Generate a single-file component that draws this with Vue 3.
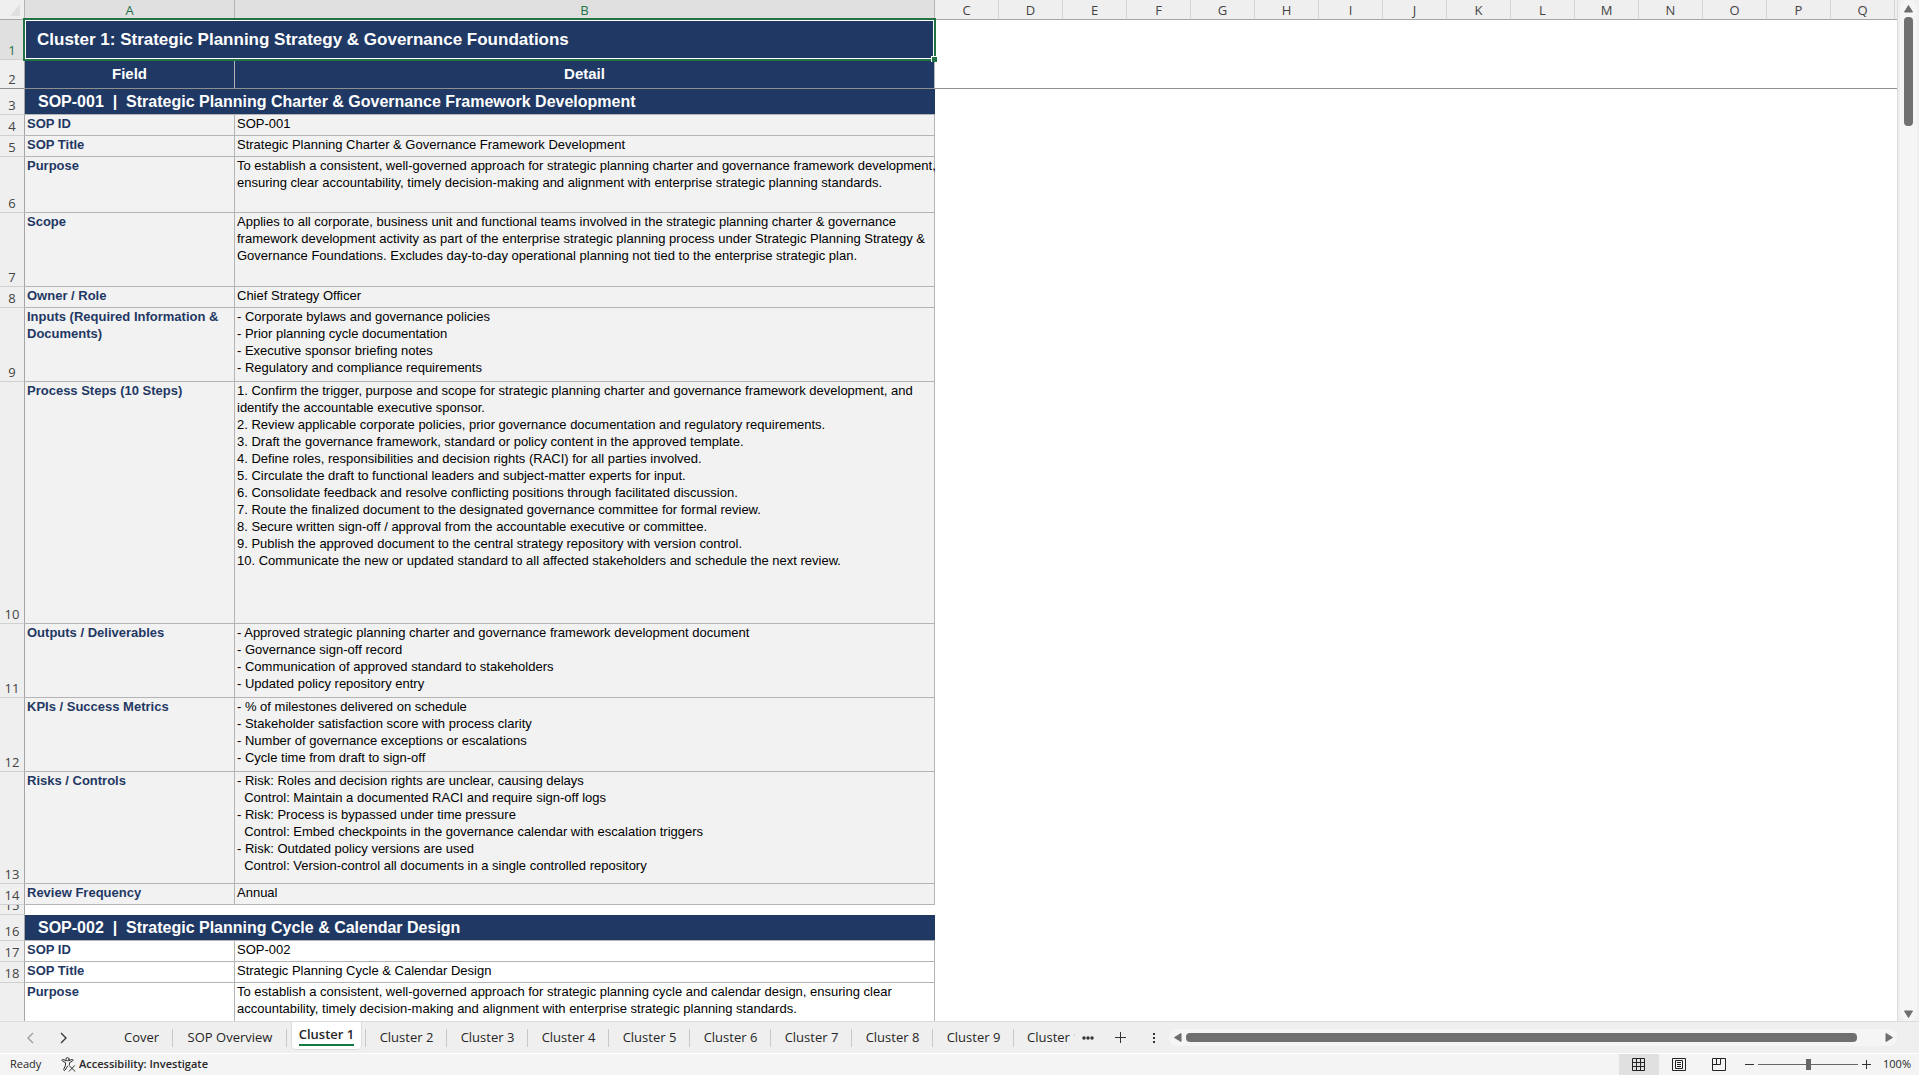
<script setup>
import { ref } from 'vue';

const columns = ['A', 'B', 'C', 'D', 'E', 'F', 'G', 'H', 'I', 'J', 'K', 'L', 'M', 'N', 'O', 'P', 'Q'];

const rows = [
  { n: 1, h: 40, type: 'title', text: 'Cluster 1: Strategic Planning Strategy & Governance Foundations' },
  { n: 2, h: 29, type: 'head', field: 'Field', detail: 'Detail' },
  { n: 3, h: 26, type: 'section', text: 'SOP-001  |  Strategic Planning Charter & Governance Framework Development' },
  { n: 4, h: 21, type: 'shaded', field: 'SOP ID', detail: 'SOP-001' },
  { n: 5, h: 21, type: 'shaded', field: 'SOP Title', detail: 'Strategic Planning Charter & Governance Framework Development' },
  {
    n: 6, h: 56, type: 'shaded', field: 'Purpose',
    detail: `To establish a consistent, well-governed approach for strategic planning charter and governance framework development,
ensuring clear accountability, timely decision-making and alignment with enterprise strategic planning standards.`
  },
  {
    n: 7, h: 74, type: 'shaded', field: 'Scope',
    detail: `Applies to all corporate, business unit and functional teams involved in the strategic planning charter & governance
framework development activity as part of the enterprise strategic planning process under Strategic Planning Strategy &
Governance Foundations. Excludes day-to-day operational planning not tied to the enterprise strategic plan.`
  },
  { n: 8, h: 21, type: 'shaded', field: 'Owner / Role', detail: 'Chief Strategy Officer' },
  {
    n: 9, h: 74, type: 'shaded', field: 'Inputs (Required Information & Documents)',
    detail: `- Corporate bylaws and governance policies
- Prior planning cycle documentation
- Executive sponsor briefing notes
- Regulatory and compliance requirements`
  },
  {
    n: 10, h: 242, type: 'shaded', field: 'Process Steps (10 Steps)',
    detail: `1. Confirm the trigger, purpose and scope for strategic planning charter and governance framework development, and
identify the accountable executive sponsor.
2. Review applicable corporate policies, prior governance documentation and regulatory requirements.
3. Draft the governance framework, standard or policy content in the approved template.
4. Define roles, responsibilities and decision rights (RACI) for all parties involved.
5. Circulate the draft to functional leaders and subject-matter experts for input.
6. Consolidate feedback and resolve conflicting positions through facilitated discussion.
7. Route the finalized document to the designated governance committee for formal review.
8. Secure written sign-off / approval from the accountable executive or committee.
9. Publish the approved document to the central strategy repository with version control.
10. Communicate the new or updated standard to all affected stakeholders and schedule the next review.`
  },
  {
    n: 11, h: 74, type: 'shaded', field: 'Outputs / Deliverables',
    detail: `- Approved strategic planning charter and governance framework development document
- Governance sign-off record
- Communication of approved standard to stakeholders
- Updated policy repository entry`
  },
  {
    n: 12, h: 74, type: 'shaded', field: 'KPIs / Success Metrics',
    detail: `- % of milestones delivered on schedule
- Stakeholder satisfaction score with process clarity
- Number of governance exceptions or escalations
- Cycle time from draft to sign-off`
  },
  {
    n: 13, h: 112, type: 'shaded', field: 'Risks / Controls',
    detail: `- Risk: Roles and decision rights are unclear, causing delays
  Control: Maintain a documented RACI and require sign-off logs
- Risk: Process is bypassed under time pressure
  Control: Embed checkpoints in the governance calendar with escalation triggers
- Risk: Outdated policy versions are used
  Control: Version-control all documents in a single controlled repository`
  },
  { n: 14, h: 21, type: 'shaded', field: 'Review Frequency', detail: 'Annual' },
  { n: 15, h: 10, type: 'blank', text: '' },
  { n: 16, h: 26, type: 'section', text: 'SOP-002  |  Strategic Planning Cycle & Calendar Design' },
  { n: 17, h: 21, type: 'plain', field: 'SOP ID', detail: 'SOP-002' },
  { n: 18, h: 21, type: 'plain', field: 'SOP Title', detail: 'Strategic Planning Cycle & Calendar Design' },
  {
    n: 19, h: 56, type: 'plain', field: 'Purpose',
    detail: `To establish a consistent, well-governed approach for strategic planning cycle and calendar design, ensuring clear
accountability, timely decision-making and alignment with enterprise strategic planning standards.`
  }
];

const tabs = ['Cover', 'SOP Overview', 'Cluster 1', 'Cluster 2', 'Cluster 3', 'Cluster 4', 'Cluster 5', 'Cluster 6', 'Cluster 7', 'Cluster 8', 'Cluster 9', 'Cluster 10'];
const activeTab = ref('Cluster 1');
const view = ref('normal');
const zoom = ref(100);
</script>

<template>
  <div class="workbook">
    <div class="main">
      <div class="grid">
        <table class="sheet">
          <colgroup>
            <col class="col-num" />
            <col class="col-a" />
            <col class="col-b" />
            <col v-for="c in columns.slice(2)" :key="c" class="col-std" />
            <col />
          </colgroup>
          <thead>
            <tr>
              <th class="corner">
                <svg width="10" height="12" viewBox="0 0 10 12"><path d="M10 0v12H0z" fill="#dfdfdf" /></svg>
              </th>
              <th v-for="(c, i) in columns" :key="c" scope="col" class="letter" :class="{ picked: i < 2 }">{{ c }}</th>
              <th class="letter"></th>
            </tr>
          </thead>
          <tbody>
            <tr v-for="row in rows" :key="row.n" :class="row.type" :style="{ height: row.h + 'px' }">
              <th scope="row" class="num" :class="{ picked: row.n === 1 }">
                <div class="num-box" :style="{ height: row.h - 1 + 'px' }">{{ row.n }}</div>
              </th>
              <td v-if="row.field === undefined" colspan="2" class="merged">
                {{ row.text }}
                <div v-if="row.n === 1" class="selection"><i class="handle"></i></div>
              </td>
              <template v-else>
                <td class="field">{{ row.field }}</td>
                <td class="detail">{{ row.detail }}</td>
              </template>
              <td colspan="16" class="rest"></td>
            </tr>
          </tbody>
        </table>
      </div>
      <div class="vscroll">
        <button class="arrow" aria-label="Scroll up">
          <svg width="9" height="8" viewBox="0 0 9 8"><path d="M4.5 0.5 8.5 7H.5z" fill="#6e6e6e" stroke="#6e6e6e" stroke-linejoin="round" /></svg>
        </button>
        <div class="thumb"></div>
        <button class="arrow down" aria-label="Scroll down">
          <svg width="9" height="8" viewBox="0 0 9 8"><path d="M4.5 7.5 8.5 1H.5z" fill="#6e6e6e" stroke="#6e6e6e" stroke-linejoin="round" /></svg>
        </button>
      </div>
    </div>

    <div class="tabbar">
      <div class="tab-nav">
        <button aria-label="Previous sheets">
          <svg width="8" height="12" viewBox="0 0 8 12"><path d="M7 1 2 6l5 5" fill="none" stroke="#9b9b9b" stroke-width="1.3" /></svg>
        </button>
        <button aria-label="Next sheets">
          <svg width="8" height="12" viewBox="0 0 8 12"><path d="M1 1l5 5-5 5" fill="none" stroke="#333" stroke-width="1.3" /></svg>
        </button>
      </div>
      <div class="tabs">
        <button v-for="t in tabs" :key="t" class="tab" :class="{ active: t === activeTab }" @click="activeTab = t">
          <span>{{ t }}</span>
        </button>
      </div>
      <button class="more" aria-label="More sheets">
        <svg width="12" height="4" viewBox="0 0 12 4" fill="#333"><circle cx="2" cy="2" r="1.7" /><circle cx="6" cy="2" r="1.7" /><circle cx="10" cy="2" r="1.7" /></svg>
      </button>
      <button class="add" aria-label="New sheet">
        <svg width="11" height="11" viewBox="0 0 11 11"><path d="M5.5 0v11M0 5.5h11" stroke="#333" /></svg>
      </button>
      <div class="splitter">
        <svg width="2" height="10" viewBox="0 0 2 10" fill="#333"><path d="M0 0h2v2H0zM0 4h2v2H0zM0 8h2v2H0z" /></svg>
      </div>
      <div class="hscroll">
        <button class="arrow" aria-label="Scroll left">
          <svg width="8" height="9" viewBox="0 0 8 9"><path d="M.5 4.5 7 .5v8z" fill="#6e6e6e" stroke="#6e6e6e" stroke-linejoin="round" /></svg>
        </button>
        <div class="thumb"></div>
        <button class="arrow" aria-label="Scroll right">
          <svg width="8" height="9" viewBox="0 0 8 9"><path d="M7.5 4.5 1 .5v8z" fill="#6e6e6e" stroke="#6e6e6e" stroke-linejoin="round" /></svg>
        </button>
      </div>
    </div>

    <div class="status">
      <span class="ready">Ready</span>
      <button class="access">
        <svg width="15" height="15" viewBox="0 0 15 15" fill="none" stroke="#333" stroke-linecap="round" stroke-linejoin="round">
          <circle cx="6.5" cy="2.2" r="1.6" />
          <path d="M5 3.6 2 2.5c-1-.3-1.6.9-.6 1.5L4.5 5.600v2.600L2.700 12.500c-.3 1 .9 1.500 1.400.6L6.500 9.200M8 3.600l3-1.100c1-.3 1.600.9.6 1.500L8.500 5.600v1.800" />
          <path d="M8 8.500 14 14.300M13.600 8.600 8.200 14.200" />
        </svg>
        <span>Accessibility: Investigate</span>
      </button>
      <div class="views">
        <button :class="{ on: view === 'normal' }" aria-label="Normal view" @click="view = 'normal'">
          <svg width="14" height="14" viewBox="0 0 14 14" fill="none" stroke="#222"><path d="M.5.5h12v12H.5zM4.500.5v12M8.500.5v12M.5 4.500h12M.5 8.500h12" /></svg>
        </button>
        <button :class="{ on: view === 'layout' }" aria-label="Page layout" @click="view = 'layout'">
          <svg width="14" height="14" viewBox="0 0 14 14" fill="none" stroke="#222"><path d="M.5.5h13v12H.5zM3.500 2.500h7v8h-7zM5 4.500h4M5 6.500h4M5 8.500h4" /></svg>
        </button>
        <button :class="{ on: view === 'breaks' }" aria-label="Page break preview" @click="view = 'breaks'">
          <svg width="14" height="14" viewBox="0 0 14 14" fill="none" stroke="#222"><path d="M.5.5h13v12H.5zM4.500.5v6M8.500.5v6M.5 6.500h8" /></svg>
        </button>
      </div>
      <button class="step" aria-label="Zoom out" @click="zoom -= 10">
        <svg width="9" height="9" viewBox="0 0 9 9"><path d="M0 4.500h9" stroke="#333" /></svg>
      </button>
      <input v-model.number="zoom" class="zoom" type="range" min="0" max="200" aria-label="Zoom" />
      <button class="step" aria-label="Zoom in" @click="zoom += 10">
        <svg width="9" height="9" viewBox="0 0 9 9"><path d="M0 4.500h9M4.500 0v9" stroke="#333" /></svg>
      </button>
      <span class="percent">{{ zoom }}%</span>
    </div>
  </div>
</template>

<style>
body {
  margin: 0;
  overflow: hidden;
}
</style>

<style scoped>
.workbook {
  height: 100vh;
  display: flex;
  flex-direction: column;
  background: #efefef;
  color: #262626;
  font-family: "Open Sans", "Noto Sans", sans-serif;
  font-size: 13px;
}

button {
  display: flex;
  align-items: center;
  justify-content: center;
  padding: 0;
  border: 0;
  background: none;
  color: inherit;
  font: inherit;
}

.main {
  flex: 1;
  min-height: 0;
  display: flex;
}

.grid {
  flex: 1;
  min-width: 0;
  overflow: hidden;
  background: #fff;
  border-right: 1px solid #dcdcdc;
}

.sheet {
  width: 100%;
  table-layout: fixed;
  border-collapse: separate;
  border-spacing: 0;

  th, td {
    box-sizing: border-box;
    padding: 0;
  }
}

.col-num {
  width: 25px;
}
.col-a {
  width: 210px;
}
.col-b {
  width: 700px;
}
.col-std {
  width: 64px;
}

thead tr {
  height: 20px;
}

.corner {
  background: #efefef;
  border-right: 1px solid #b4b4b4;
  border-bottom: 1px solid #a6a6a6;
  line-height: 0;
  text-align: right;

  svg {
    margin-right: 4px;
  }
}

.letter {
  background: #efefef;
  border-right: 1px solid #d4d4d4;
  border-bottom: 1px solid #a6a6a6;
  color: #444;
  font-weight: 400;
  line-height: 18px;

  &:last-child {
    border-right: 0;
  }
  &.picked {
    background: #e0e0e0;
    border-right-color: #b4b4b4;
    color: #217346;
  }
}

.num {
  background: #efefef;
  border-right: 1px solid #a6a6a6;
  border-bottom: 1px solid #d0d0d0;
  color: #444;
  font-weight: 400;
  vertical-align: bottom;

  &.picked {
    background: #e0e0e0;
    color: #217346;
  }
}

.num-box {
  display: flex;
  align-items: flex-end;
  justify-content: center;
  overflow: hidden;
  line-height: 17px;
}

td {
  font-family: "Liberation Sans", Arial, sans-serif;
  font-size: 13px;
  line-height: 17px;
  vertical-align: top;
}

.merged {
  position: relative;
  color: #fff;
  font-weight: 700;
  vertical-align: middle;
}

.title .merged {
  background: #1f3864;
  padding: 0 0 2px 12px;
  font-size: 17px;
  white-space: nowrap;
}

.blank .merged {
  line-height: 0;
}

.selection {
  position: absolute;
  inset: -2px -1px -1px -2px;
  border: 2px solid #217346;
  box-shadow: inset 0 0 0 1px #fff;
}

.handle {
  position: absolute;
  right: -3px;
  bottom: -3px;
  width: 5px;
  height: 5px;
  background: #217346;
  border: solid #fff;
  border-width: 1px 0 0 1px;
}

.head {
  .field, .detail {
    background: #1f3864;
    border-right: 1px solid #b4b4b4;
    border-bottom: 1px solid #8f8f8f;
    padding-bottom: 2px;
    color: #fff;
    font-size: 15px;
    font-weight: 700;
    text-align: center;
    vertical-align: middle;
  }
  .num, .rest {
    border-bottom: 1px solid #8f8f8f;
  }
}

.section .merged {
  background: #1f3864;
  border-bottom: 1px solid #b4b4b4;
  padding-left: 13px;
  font-size: 16px;
  white-space: pre;
}

.shaded, .plain {
  .field, .detail {
    border-right: 1px solid #b4b4b4;
    border-bottom: 1px solid #b4b4b4;
    padding-left: 2px;
  }
  .field {
    color: #1f3864;
    font-weight: 700;
  }
  .detail {
    color: #000;
    white-space: pre;
  }
}

.shaded .field, .shaded .detail {
  background: #f2f2f2;
}

.vscroll {
  width: 17px;
  margin: 0 2px;
  display: flex;
  flex-direction: column;
  align-items: center;
  background: #f5f5f5;
  border-radius: 8px;

  .arrow {
    height: 17px;
  }
  .thumb {
    width: 9px;
    height: 109px;
    border-radius: 4px;
    background: #707070;
  }
  .down {
    margin-top: auto;
    height: 14px;
  }
}

.tabbar {
  height: 31px;
  display: flex;
  align-items: center;
  border-top: 1px solid #dcdcdc;
  border-bottom: 1px solid #fff;
}

.tab-nav {
  display: flex;
  gap: 26px;
  padding: 0 42px 0 26px;
}

.tabs {
  display: flex;
  align-self: stretch;
  width: 965px;
  overflow: hidden;
}

.tab {
  position: relative;
  flex: none;
  min-width: 81px;
  padding: 0 13px 2px;
  line-height: 20px;
  white-space: nowrap;

  &:first-child {
    min-width: 63px;
  }
  &:nth-child(2) {
    min-width: 114px;
  }
  &::after {
    content: "";
    position: absolute;
    right: 0;
    top: 7px;
    height: 18px;
    border-right: 1px solid #c8c8c8;
  }
  &.active {
    box-sizing: border-box;
    width: 71px;
    min-width: 0;
    height: 28px;
    margin: 0 4px;
    padding: 0 0 2px;
    background: #fff;
    border: 1px solid #dcdcdc;
    border-top: 0;
    border-radius: 0 0 5px 5px;
    font-weight: 600;

    span {
      border-bottom: 2px solid #107c41;
    }
    &::after {
      right: -5px;
    }
  }
}

.more {
  width: 26px;
}
.add {
  width: 38px;
}
.splitter {
  width: 30px;
  display: flex;
  justify-content: center;
}

.hscroll {
  flex: 1;
  height: 17px;
  margin-right: 22px;
  display: flex;
  align-items: center;
  background: #f5f5f5;
  border-radius: 8px;

  .arrow {
    width: 17px;
  }
  .thumb {
    flex: 1;
    height: 9px;
    margin-right: 23px;
    border-radius: 4px;
    background: #707070;
  }
}

.status {
  height: 21px;
  display: flex;
  align-items: center;
  background: #f4f4f4;
  font-size: 11px;

  span {
    padding-bottom: 2px;
  }
}

.ready {
  width: 51px;
  padding-left: 10px;
}

.access {
  gap: 3px;
  font-weight: 600;
}

.views {
  display: flex;
  align-self: stretch;
  margin-left: auto;
  margin-right: 6px;

  button {
    width: 40px;
  }
  .on {
    background: #e0e0e0;
  }
}

.step {
  width: 9px;
}

.zoom {
  appearance: none;
  width: 100px;
  height: 12px;
  margin: 0 4px;
  background: linear-gradient(#666, #666) center / 100% 1px no-repeat;

  &::-webkit-slider-thumb {
    appearance: none;
    width: 5px;
    height: 11px;
    background: #666;
  }
}

.percent {
  width: 48px;
  box-sizing: border-box;
  padding-right: 8px;
  text-align: right;
}
</style>
